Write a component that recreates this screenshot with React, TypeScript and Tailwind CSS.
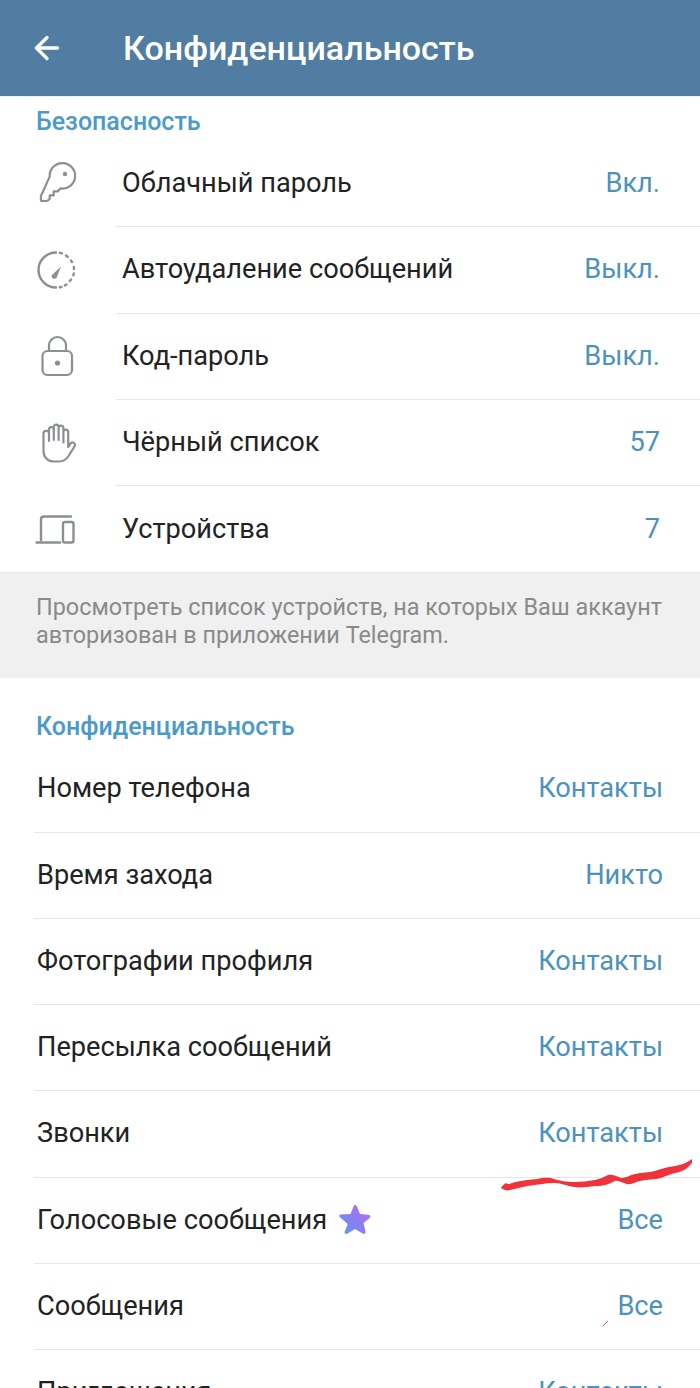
import { ArrowLeft } from 'lucide-react';
import type { ReactNode } from 'react';

const icon = 'w-[44px] h-[44px] text-[#8a8f94]';

function KeyIcon() {
  return (
    <svg viewBox="0 0 44 44" className={icon} fill="none" stroke="currentColor" strokeWidth="2.2" strokeLinejoin="round" strokeLinecap="round">
      <path d="M15 16a13 13 0 1 1 11 12l-3 3h-4v4h-4v3.500l-1.500 1.500c-.6.6-1.300.8-2 .8H7.500c-.9 0-1.500-.6-1.500-1.500v-3.300c0-.8.300-1.300.8-1.800z" transform="translate(0 -1) scale(.98)" />
      <circle cx="30" cy="12" r="2.200" fill="currentColor" stroke="none" />
    </svg>
  );
}

function TimerIcon() {
  return (
    <svg viewBox="0 0 44 44" className={icon} fill="none" stroke="currentColor" strokeWidth="2.4" strokeLinecap="round">
      <path d="M21 4.500A17.500 17.500 0 0 0 21 39.500" />
      <path d="M25 4.800l2 .5M31 7.500l1.600 1.200M36 12.500l1 1.600M38.800 19l.2 2M38.800 25.500l-.4 1.800M36 31.500l-1.200 1.600M31.500 36.500l-1.700 1M26.500 39l-1.700.3" />
      <path d="M16.500 27.500l9.500-9-4.500 11.500a3 3 0 0 1-5-2.500z" fill="currentColor" stroke="none" />
    </svg>
  );
}

function LockIcon() {
  return (
    <svg viewBox="0 0 44 44" className={icon} fill="none" stroke="currentColor" strokeWidth="2.2" strokeLinejoin="round">
      <rect x="7.500" y="16" width="29.500" height="24" rx="5" />
      <path d="M14 16v-5.500a8.500 8.500 0 0 1 17 0V16" />
      <circle cx="22.500" cy="28" r="2.600" fill="currentColor" stroke="none" />
    </svg>
  );
}

function HandIcon() {
  return (
    <svg viewBox="0 0 44 44" className={icon} fill="none" stroke="currentColor" strokeWidth="2.2" strokeLinecap="round" strokeLinejoin="round">
      <path d="M15 21V9.500a2.400 2.400 0 0 1 4.800 0V20M19.800 20V7a2.400 2.400 0 0 1 4.800 0v13M24.600 20V8a2.400 2.400 0 0 1 4.800 0v14.500M29.400 22.500V12a2.400 2.400 0 0 1 4.800 0v15l2.200-3.400a2.500 2.500 0 0 1 4.300 2.500L34.500 36c-2 3-5 5.500-9.500 5.500h-5C13.500 41.500 9.500 37 9.500 31V13.500a2.700 2.700 0 0 1 5.500 0V21" transform="translate(-1 -1)" />
    </svg>
  );
}

function DevicesIcon() {
  return (
    <svg viewBox="0 0 44 44" className={icon} fill="none" stroke="currentColor" strokeWidth="2.4" strokeLinecap="round" strokeLinejoin="round">
      <path d="M6 33V12.500c0-1.700 1.300-3 3-3h27" />
      <path d="M1.500 35.500H25" />
      <rect x="28" y="15" width="10.500" height="20.500" rx="2" />
    </svg>
  );
}

function Row({ icon, label, value, last }: { icon?: ReactNode; label: ReactNode; value: string; last?: boolean }) {
  if (icon) {
    return (
      <div className="flex h-[86.25px] items-center">
        <div className="flex w-[116px] shrink-0 justify-start pl-[35px]">{icon}</div>
        <div className={`flex h-full flex-1 items-center justify-between pr-[40px] ${last ? '' : 'border-b border-[#e6e6e6]'}`}>
          <span className="pl-[6px]">{label}</span>
          <span className="text-[#4b92bf]">{value}</span>
        </div>
      </div>
    );
  }
  return (
    <div className="ml-[34px] flex h-[86.25px] items-center justify-between border-b border-[#e6e6e6] pl-[3px] pr-[37px]">
      <span className="flex items-center">{label}</span>
      <span className="text-[#4b92bf]">{value}</span>
    </div>
  );
}

export default function App() {
  return (
    <div className="relative h-[1388px] w-[700px] overflow-hidden bg-white font-['Roboto',sans-serif] text-[27.2px] text-[#222222]">
      <div className="flex h-[96px] items-center bg-[#517da2] text-white">
        <ArrowLeft className="ml-[29px] h-[36px] w-[36px]" strokeWidth={2.2} />
        <h1 className="ml-[58px] text-[34px] font-medium leading-[40px]">Конфиденциальность</h1>
      </div>
      <div className="h-[1px] bg-[#eef3f6]" />

      <div className="flex h-[44px] items-center pl-[36px] pt-[6px] text-[25px] font-medium text-[#4b9ac9]">Безопасность</div>
      <Row icon={<KeyIcon />} label="Облачный пароль" value="Вкл." />
      <Row icon={<TimerIcon />} label="Автоудаление сообщений" value="Выкл." />
      <Row icon={<LockIcon />} label="Код-пароль" value="Выкл." />
      <Row icon={<HandIcon />} label="Чёрный список" value="57" />
      <Row icon={<DevicesIcon />} label="Устройства" value="7" last />

      <div className="h-[106px] border-t border-[#e4e4e4] bg-[#f0f0f0] px-[36px] pt-[20px] text-[23.4px] leading-[28px] text-[#8a8a8a]">
        Просмотреть список устройств, на которых Ваш аккаунт авторизован в приложении Telegram.
      </div>

      <div className="flex h-[68px] items-end pb-[1px] pl-[36px] text-[25px] font-medium text-[#4b9ac9]">Конфиденциальность</div>
      <Row label="Номер телефона" value="Контакты" />
      <Row label="Время захода" value="Никто" />
      <Row label="Фотографии профиля" value="Контакты" />
      <Row label="Пересылка сообщений" value="Контакты" />
      <Row label="Звонки" value="Контакты" />
      <Row
        label={
          <>
            Голосовые сообщения
            <svg viewBox="0 0 34 32" className="ml-[11px] h-[32px] w-[34px]">
              <defs>
                <linearGradient id="star" x1="0" y1="1" x2="1" y2="0">
                  <stop offset="0" stopColor="#5b9cf5" />
                  <stop offset="0.55" stopColor="#8f7bf2" />
                  <stop offset="1" stopColor="#c56ff0" />
                </linearGradient>
              </defs>
              <path d="M17 1c1 0 1.600.6 2 1.600l3 7.400 8.500.7c2 .2 2.600 2 1.200 3.200L25.500 19l2 8.500c.4 2-1.200 3-2.800 2L17 25l-7.500 4.600c-1.700 1-3.300 0-2.800-2l3-7.600L1.700 13c-1-1-.5-2.500 1-2.600l9.800-.5 3-7.300C15.900 1.500 16.300 1 17 1z" fill="url(#star)" />
            </svg>
          </>
        }
        value="Все"
      />
      <Row label="Сообщения" value="Все" />
      <Row label="Приглашения" value="Контакты" />

      {/* hand-drawn marks over the screenshot */}
      <svg viewBox="0 0 700 1388" className="pointer-events-none absolute inset-0 h-[1388px] w-[700px]">
        <path d="M692 1163c-5 6-10 9-17 10-5 1-9 3-14 5-6 2-14 1-21 3-5 1-8 4-13 3-5-1-8-4-12-3-6 3-11 5-20 5-7 1-14 2-21 1-7-1-12-4-20-4-9 0-18 2-26 3-7 1-12 3-18 4-3 1-6 0-9-2 1-2 3-4 5-5 1 1 2 1 3 1 8-3 18-4 28-5 6-1 11-2 17 0 7 2 12 3 21 3 6 0 13-1 20-2 5-1 9-3 13-5 4-1 8 1 13 3 5 0 9-3 14-4 7-2 14-1 20-3 5-2 9-3 14-4 9-1 16-3 23-8z" fill="#f0333a" />
        <path d="M603 1326l5-5" stroke="#d8505a" strokeWidth="1" fill="none" />
      </svg>
    </div>
  );
}
